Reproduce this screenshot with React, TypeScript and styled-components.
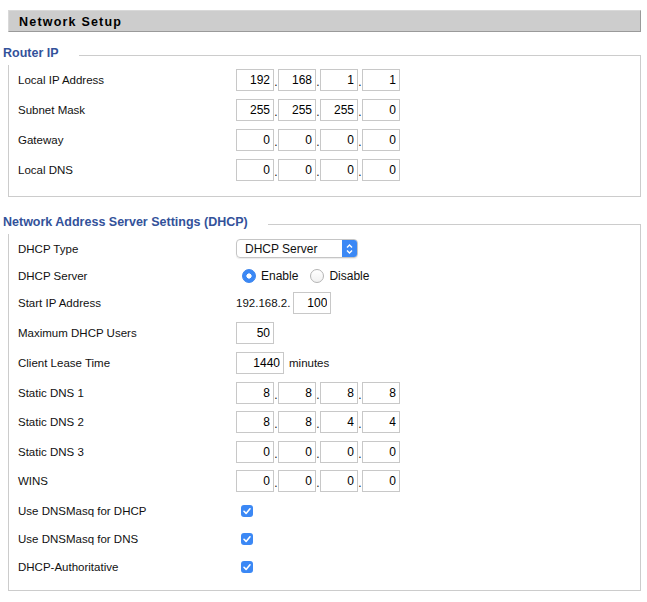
import styled, { createGlobalStyle } from 'styled-components';

const GlobalStyle = createGlobalStyle`
  body {
    margin: 0;
    background: #fff;
    font-family: "Liberation Sans", Arial, sans-serif;
    font-size: 11.5px;
    color: #111;
  }
`;

const Page = styled.div`
  padding: 10px 6px 12px 8px;
`;

const Header = styled.div`
  height: 20px;
  line-height: 22px;
  padding-left: 10px;
  background: #cdcdcd;
  border-top: 1px solid #d9d9d9;
  border-left: 1px solid #d9d9d9;
  border-right: 1px solid #9a9a9a;
  border-bottom: 1px solid #9a9a9a;
  font-size: 12.5px;
  font-weight: bold;
  letter-spacing: 1.2px;
  color: #000;
`;

const Fieldset = styled.fieldset<{ $top: number; $bottom: number }>`
  margin: ${p => p.$top}px 0 0;
  padding: 0 10px ${p => p.$bottom}px 9px;
  border: 1px solid #cccccc;
  min-width: 0;
`;

const Legend = styled.legend`
  margin-left: -15px;
  padding: 0 20px 4px 0;
  font-size: 12.5px;
  line-height: 15px;
  font-weight: bold;
  color: #33529a;
`;

const Row = styled.div<{ $h?: number }>`
  display: flex;
  align-items: center;
  height: ${p => p.$h ?? 30}px;
`;

const Label = styled.div`
  width: 218px;
  flex: none;
`;

const Field = styled.div`
  display: flex;
  align-items: center;
`;

const IpGroup = styled.div`
  display: flex;
  align-items: flex-end;
`;

const Box = styled.input<{ $w?: number }>`
  box-sizing: border-box;
  width: ${p => p.$w ?? 38}px;
  height: 22px;
  margin: 0;
  padding: 0 3px 0 2px;
  border: 1px solid #c8c8c8;
  border-radius: 0;
  background: #fff;
  color: #000;
  text-align: right;
  font: 12px "Liberation Sans", Arial, sans-serif;
  outline: none;
`;

const Dot = styled.span`
  width: 4px;
  padding-bottom: 3px;
  font-size: 12px;
  line-height: 12px;
  text-align: center;
`;

const Prefix = styled.span`
  margin-right: 3px;
  font-size: 11.5px;
`;

const Suffix = styled.span`
  margin-left: 5px;
`;

const SelectBox = styled.div`
  box-sizing: border-box;
  width: 122px;
  height: 19px;
  display: flex;
  align-items: center;
  justify-content: space-between;
  padding-left: 8px;
  border: 1px solid #c5c5c5;
  border-radius: 4px;
  box-shadow: 0 1px 1px rgba(0, 0, 0, 0.08);
  font-size: 12px;
  color: #111;
  overflow: hidden;
`;

const SelectArrow = styled.span`
  width: 15px;
  height: 100%;
  display: flex;
  align-items: center;
  justify-content: center;
  background: #3b88f5;
`;

const RadioGroup = styled.div`
  display: flex;
  align-items: center;
  gap: 12px;
  padding-left: 6px;
`;

const RadioLabel = styled.label`
  display: flex;
  align-items: center;
  gap: 5px;
  font-size: 12px;
`;

const Radio = styled.span<{ $on?: boolean }>`
  box-sizing: border-box;
  width: 14px;
  height: 14px;
  border-radius: 50%;
  border: ${p => (p.$on ? '1px solid #3a84ee' : '1px solid #b4b4b4')};
  background: ${p =>
    p.$on
      ? 'radial-gradient(circle, #fff 0 2.3px, #3b88f5 2.9px)'
      : 'linear-gradient(#ffffff, #f1f1f1)'};
`;

const Check = styled.span`
  width: 12px;
  height: 12px;
  margin-left: 5px;
  border-radius: 3px;
  background: #3b88f5;
  display: flex;
  align-items: center;
  justify-content: center;
`;

function IpField({ parts }: { parts: string[] }) {
  return (
    <IpGroup>
      {parts.map((v, i) => (
        <IpGroup key={i}>
          <Box defaultValue={v} />
          {i < parts.length - 1 && <Dot>.</Dot>}
        </IpGroup>
      ))}
    </IpGroup>
  );
}

function Checkbox() {
  return (
    <Check>
      <svg width="12" height="12" viewBox="0 0 12 12">
        <polyline points="3,6.3 5.1,8.4 9,3.8" fill="none" stroke="#fff" strokeWidth="1.6" strokeLinecap="round" strokeLinejoin="round" />
      </svg>
    </Check>
  );
}

const routerRows = [
  { label: 'Local IP Address', ip: ['192', '168', '1', '1'] },
  { label: 'Subnet Mask', ip: ['255', '255', '255', '0'] },
  { label: 'Gateway', ip: ['0', '0', '0', '0'] },
  { label: 'Local DNS', ip: ['0', '0', '0', '0'] },
];

const dnsRows = [
  { label: 'Static DNS 1', ip: ['8', '8', '8', '8'] },
  { label: 'Static DNS 2', ip: ['8', '8', '4', '4'] },
  { label: 'Static DNS 3', ip: ['0', '0', '0', '0'] },
  { label: 'WINS', ip: ['0', '0', '0', '0'] },
];

export default function App() {
  return (
    <Page>
      <GlobalStyle />
      <Header>Network Setup</Header>

      <Fieldset $top={14} $bottom={11}>
        <Legend>Router IP</Legend>
        {routerRows.map(r => (
          <Row key={r.label}>
            <Label>{r.label}</Label>
            <IpField parts={r.ip} />
          </Row>
        ))}
      </Fieldset>

      <Fieldset $top={18} $bottom={10}>
        <Legend>Network Address Server Settings (DHCP)</Legend>
        <Row $h={29}>
          <Label>DHCP Type</Label>
          <SelectBox>
            DHCP Server
            <SelectArrow>
              <svg width="9" height="12" viewBox="0 0 9 12">
                <polyline points="2,4.5 4.5,2 7,4.5" fill="none" stroke="#fff" strokeWidth="1.4" />
                <polyline points="2,7.5 4.5,10 7,7.5" fill="none" stroke="#fff" strokeWidth="1.4" />
              </svg>
            </SelectArrow>
          </SelectBox>
        </Row>
        <Row $h={25}>
          <Label>DHCP Server</Label>
          <RadioGroup>
            <RadioLabel>
              <Radio $on />
              Enable
            </RadioLabel>
            <RadioLabel>
              <Radio />
              Disable
            </RadioLabel>
          </RadioGroup>
        </Row>
        <Row>
          <Label>Start IP Address</Label>
          <Field>
            <Prefix>192.168.2.</Prefix>
            <Box defaultValue="100" />
          </Field>
        </Row>
        <Row>
          <Label>Maximum DHCP Users</Label>
          <Field>
            <Box defaultValue="50" />
          </Field>
        </Row>
        <Row>
          <Label>Client Lease Time</Label>
          <Field>
            <Box $w={48} defaultValue="1440" />
            <Suffix>minutes</Suffix>
          </Field>
        </Row>
        {dnsRows.map(r => (
          <Row key={r.label} $h={29.5}>
            <Label>{r.label}</Label>
            <IpField parts={r.ip} />
          </Row>
        ))}
        <Row $h={29}>
          <Label>Use DNSMasq for DHCP</Label>
          <Checkbox />
        </Row>
        <Row $h={28}>
          <Label>Use DNSMasq for DNS</Label>
          <Checkbox />
        </Row>
        <Row $h={27}>
          <Label>DHCP-Authoritative</Label>
          <Checkbox />
        </Row>
      </Fieldset>
    </Page>
  );
}
